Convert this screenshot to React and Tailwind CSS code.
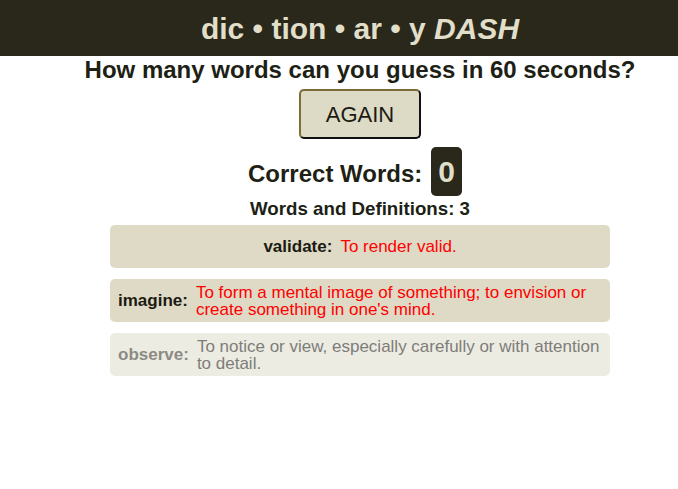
import React from "react";

const words = [
  { word: "validate", definition: "To render valid.", state: "done" },
  {
    word: "imagine",
    definition:
      "To form a mental image of something; to envision or create something in one's mind.",
    state: "done",
  },
  {
    word: "observe",
    definition: "To notice or view, especially carefully or with attention to detail.",
    state: "pending",
  },
];

const WordCard = ({ word, definition, state }) => {
  const pending = state === "pending";
  return (
    <div
      className={`flex h-[43px] items-center justify-center gap-2 rounded-[5px] px-2 ${
        pending ? "bg-[#edece2]" : "bg-[#dedac6]"
      }`}
    >
      <span
        className={`whitespace-nowrap text-[17px] font-bold ${
          pending ? "text-[#8b8a84]" : "text-[#1c1b12]"
        }`}
      >
        {word}:
      </span>
      <span
        className={`text-[17px] leading-[17px] ${
          pending ? "text-[#7d7d7b]" : "text-[#ff0000]"
        }`}
      >
        {definition}
      </span>
    </div>
  );
};

export default function App() {
  const correct = 0;

  return (
    <div className="min-h-screen w-[720px] bg-white font-['Liberation_Sans',Arial,sans-serif] text-[#201f15]">
      <header className="flex h-14 items-center justify-center bg-[#29281a]">
        <h1 className="text-[30px] font-bold text-[#e1dec9]">
          dic • tion • ar • y <em>DASH</em>
        </h1>
      </header>

      <div className="flex flex-col items-center">
        <h2 className="text-[24px] font-bold leading-[28px]">
          How many words can you guess in 60 seconds?
        </h2>

        <button className="mt-[5px] h-[50px] w-[122px] rounded-[5px] border-2 border-t-[#7d6c35] border-l-[#7d6c35] border-b-[#111] border-r-[#111] bg-[#dddac6] text-[22px] text-[#1c1b12]">
          AGAIN
        </button>

        <div className="mt-2 flex items-baseline gap-[9px] pr-[10px]">
          <span className="text-[24px] font-bold">Correct Words:</span>
          <span className="rounded-[5px] bg-[#29281a] px-[7px] py-[7px] text-[30px] font-bold leading-[35px] text-[#e1dec9]">
            {correct}
          </span>
        </div>

        <h3 className="mt-[2px] text-[18.72px] font-bold leading-[22px]">
          Words and Definitions: {words.length}
        </h3>

        <div className="mt-[5px] flex w-[500px] flex-col gap-[11px]">
          {words.map((w) => (
            <WordCard key={w.word} {...w} />
          ))}
        </div>
      </div>
    </div>
  );
}
